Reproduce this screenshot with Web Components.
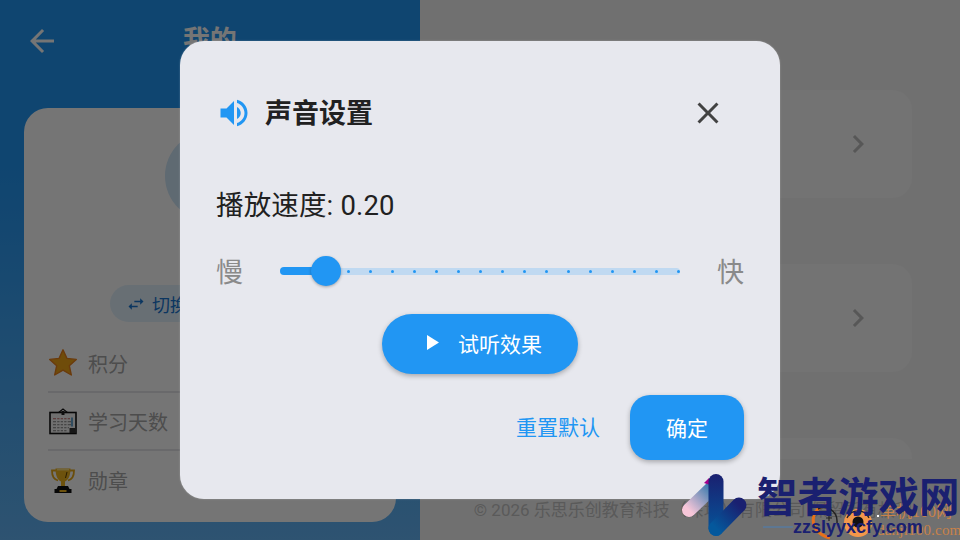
<!DOCTYPE html>
<html lang="zh">
<head>
<meta charset="utf-8">
<title>声音设置</title>
<style>
  html, body { margin: 0; height: 100%; overflow: hidden; }
  body { font-family: Roboto, "Noto Sans CJK SC", sans-serif; }
</style>
</head>
<body>
<app-screen>
  <profile-panel slot="left">
    <stat-row icon="star" label="积分" first></stat-row>
    <stat-row icon="calendar" label="学习天数"></stat-row>
    <stat-row icon="trophy" label="勋章" last></stat-row>
  </profile-panel>
  <settings-panel slot="right">
    <menu-card></menu-card>
    <menu-card></menu-card>
    <menu-card></menu-card>
  </settings-panel>
  <sound-dialog slot="overlay" value="0.20"></sound-dialog>
  <site-watermark slot="overlay"></site-watermark>
</app-screen>

<script>
const html = String.raw;

function define(name, markup, extra) {
  const tpl = document.createElement("template");
  tpl.innerHTML = markup;
  customElements.define(name, class extends HTMLElement {
    constructor() {
      super();
      this.attachShadow({ mode: "open" }).appendChild(tpl.content.cloneNode(true));
    }
    connectedCallback() {
      if (extra) extra(this, this.shadowRoot);
    }
  });
}

define("app-screen", html`
  <style>
    :host { display: block; position: relative; width: 960px; height: 540px; overflow: hidden; }
    .page { display: flex; height: 100%; }
    .scrim { position: absolute; inset: 0; background: rgba(0, 0, 0, .54); }
  </style>
  <div class="page">
    <slot name="left"></slot>
    <slot name="right"></slot>
  </div>
  <div class="scrim"></div>
  <slot name="overlay"></slot>
`);

define("profile-panel", html`
  <style>
    :host {
      display: flex; flex-direction: column; box-sizing: border-box;
      width: 420px; height: 540px; padding: 0 24px 18px;
      background: linear-gradient(180deg, #2196f3 0%, #2196f3 30%, #64b5f6 100%);
    }
    header { display: flex; align-items: center; height: 82px; margin-bottom: 26px; position: relative; flex: none; }
    header svg { width: 36px; height: 36px; fill: #fff; }
    h1 { margin: 0; position: absolute; left: 0; right: 0; text-align: center; font-size: 27px; font-weight: 700; color: #fff; line-height: 82px; }
    .card { flex: 1; background: #fff; border-radius: 24px; padding: 23px 24px 0; display: flex; flex-direction: column; align-items: center; }
    .avatar { width: 90px; height: 90px; border-radius: 50%; background: #cfe6f8; flex: none; }
    .switch {
      display: flex; align-items: center; gap: 6px; box-sizing: border-box; flex: none;
      margin-top: 64px; height: 37px; padding: 0 16px; border-radius: 19px;
      background: #e3f2fd; color: #1976d2; font-size: 18px; width: 200px;
    }
    .switch svg { width: 20px; height: 20px; fill: #1976d2; flex: none; }
    .rows { align-self: stretch; margin-top: 14px; }
  </style>
  <header>
    <svg viewBox="0 0 24 24"><path d="M20 11H7.830l5.590-5.590L12 4l-8 8 8 8 1.410-1.410L7.830 13H20z"/></svg>
    <h1>我的</h1>
  </header>
  <div class="card">
    <div class="avatar"></div>
    <div class="switch">
      <svg viewBox="0 0 24 24"><path d="M6.990 11 3 15l3.990 4v-3H14v-2H6.990zM21 9l-3.990-4v3H10v2h7.010v3z"/></svg>
      <span>切换</span>
    </div>
    <div class="rows"><slot></slot></div>
  </div>
`);

const statIcons = {
  star: html`<svg viewBox="0 0 28 28"><path d="M14 .8l3.900 8.600 9.400 1-7 6.300 2 9.300L14 21.200l-8.300 4.800 2-9.300-7-6.300 9.400-1z" fill="#f2a516" stroke="#e8801c" stroke-width="1.400" stroke-linejoin="round"/></svg>`,
  calendar: html`<svg viewBox="0 0 28 28">
    <path d="M9 6l5-4 5 4" fill="none" stroke="#111" stroke-width="1.200"/>
    <rect x="1" y="5.500" width="26" height="21" fill="#f4f4f4" stroke="#111" stroke-width="1.600"/>
    <rect x="12.500" y="4" width="3" height="4" fill="#222"/>
    <g fill="#999"><rect x="4" y="11" width="17" height="1.300" fill="#c88"/><rect x="4" y="14" width="20" height="1.300"/><rect x="4" y="17" width="20" height="1.300"/><rect x="4" y="20" width="16" height="1.300"/><rect x="4" y="23" width="14" height="1.300"/></g>
    <g fill="#f4f4f4"><rect x="7" y="10" width="1.200" height="15"/><rect x="10.500" y="10" width="1.200" height="15"/><rect x="14" y="10" width="1.200" height="15"/><rect x="17.500" y="10" width="1.200" height="15"/></g>
    <rect x="22" y="10.500" width="2" height="9" fill="#6aa7cf"/>
    <rect x="20.500" y="21" width="6" height="5" fill="#333"/>
  </svg>`,
  trophy: html`<svg viewBox="0 0 28 28">
    <path d="M7 4.500H3c0 6 2 9 6 10M21 4.500h4c0 6-2 9-6 10" fill="none" stroke="#e6a817" stroke-width="1.800"/>
    <path d="M6.500 2.500h15c0 7-2 11.500-5.500 13v4.500h-4v-4.500C8.500 14 6.500 9.500 6.500 2.500z" fill="#eeb21d"/>
    <path d="M8 3h12v1.500H8z" fill="#f8dc7a"/>
    <path d="M18 6l-1.500 6" stroke="#5a3d00" stroke-width="1"/>
    <path d="M9 20h10l1.500 3h-13z" fill="#111"/>
    <rect x="5.500" y="23" width="17" height="4" fill="#111"/>
    <rect x="10.500" y="24" width="7" height="2" fill="#eeb21d"/>
  </svg>`
};

define("stat-row", html`
  <style>
    :host { display: block; box-sizing: border-box; height: 58px; }
    :host(:not([last])) { border-bottom: 2px solid #e5e5ea; }
    :host([first]) .row { margin-top: -1px; }
    :host([last]) .row { margin-top: 1px; }
    .row { display: flex; align-items: center; gap: 11px; height: 56px; font-size: 20px; padding-left: 1px; color: #a8a8a8; }
    .icon { width: 28px; height: 28px; flex: none; }
    svg { display: block; width: 28px; height: 28px; }
  </style>
  <div class="row"><span class="icon"></span><span class="label"></span></div>
`, (el, root) => {
  root.querySelector(".icon").innerHTML = statIcons[el.getAttribute("icon")];
  root.querySelector(".label").textContent = el.getAttribute("label");
});

define("settings-panel", html`
  <style>
    :host { flex: 1; display: flex; flex-direction: column; box-sizing: border-box; height: 540px; padding: 0 48px 0 36px; background: #f5f5f5; }
    .scroll { height: 459px; box-sizing: border-box; padding-top: 90px; overflow: hidden; display: flex; flex-direction: column; gap: 66px; flex: none; }
    footer { margin: 39px 0 0 18px; font-size: 17px; line-height: 24px; color: #c4c4c4; white-space: nowrap; }
  </style>
  <div class="scroll"><slot></slot></div>
  <footer>© 2026 乐思乐创教育科技（深圳）有限公司 保留所有权利</footer>
`);

define("menu-card", html`
  <style>
    :host { display: flex; align-items: center; justify-content: flex-end; box-sizing: border-box; flex: none; height: 108px; padding-right: 36px; background: #fafafa; border-radius: 20px; }
    svg { width: 36px; height: 36px; fill: #bdbdbd; display: block; }
  </style>
  <svg viewBox="0 0 24 24"><path d="M8.590 16.590 13.170 12 8.590 7.410 10 6l6 6-6 6z"/></svg>
`);

define("speed-slider", html`
  <style>
    :host { display: block; position: relative; flex: 1; height: 30px; }
    .track { position: absolute; left: 0; right: 0; top: 11.500px; height: 7px; border-radius: 4px; background: #c0d9f1; }
    .active { position: absolute; left: 0; top: 11px; width: 46px; height: 8px; border-radius: 4px 0 0 4px; background: #2196f3; }
    .dots { position: absolute; left: .5px; right: .5px; top: 13.500px; display: flex; justify-content: space-between; }
    .dots i { width: 3px; height: 3px; border-radius: 50%; background: #2196f3; }
    .dots i.off { visibility: hidden; }
    .thumb { position: absolute; left: 31px; top: 0; width: 30px; height: 30px; border-radius: 50%; background: #2196f3; box-shadow: 0 1px 3px rgba(0, 0, 0, .3); }
  </style>
  <div class="track"></div>
  <div class="active"></div>
  <div class="dots"></div>
  <div class="thumb"></div>
`, (el, root) => {
  const dots = root.querySelector(".dots");
  for (let i = 0; i <= 18; i++) {
    const d = document.createElement("i");
    if (i < 3) d.className = "off";
    dots.appendChild(d);
  }
});

define("app-button", html`
  <style>
    :host { display: inline-flex; align-items: center; justify-content: center; box-sizing: border-box; color: #fff; font-size: 21px; background: #2196f3; box-shadow: 0 2px 5px rgba(0, 0, 0, .28); }
    :host([pill]) { width: 196px; height: 60px; border-radius: 30px; gap: 19px; padding: 0 0 3px 9px; }
    :host([box]) { width: 114px; height: 65px; border-radius: 20px; padding-bottom: 2px; }
  </style>
  <slot></slot>
`);

define("sound-dialog", html`
  <style>
    :host {
      position: absolute; left: 180px; top: 41px; width: 600px; height: 458px; box-sizing: border-box;
      display: flex; flex-direction: column; padding: 0 36px;
      background: #e7e8ee; border-radius: 24px; box-shadow: 0 0 2px rgba(255, 255, 255, .3);
    }
    .head { display: flex; align-items: center; height: 144px; flex: none; }
    .head .spk { width: 36px; height: 36px; fill: #2196f3; flex: none; }
    h2 { margin: 0 0 4px 13px; flex: 1; font-size: 27px; font-weight: 700; color: #212121; }
    .close { width: 36px; height: 36px; fill: #424242; margin-right: 18px; flex: none; }
    .speed { margin-top: 1px; font-size: 27.500px; letter-spacing: .15px; line-height: 40px; color: #212121; flex: none; }
    .slide { display: flex; align-items: center; margin-top: 30px; height: 30px; flex: none; font-size: 27px; color: #8a8a8a; }
    .slide span { position: relative; top: -1px; }
    .slide .slow { width: 64px; }
    .slide .fast { width: 64px; text-align: right; }
    .try { display: flex; justify-content: center; margin-top: 28px; flex: none; }
    .try svg { width: 12px; height: 15px; fill: #fff; }
    .foot { display: flex; justify-content: flex-end; align-items: center; gap: 30px; margin-top: 21px; flex: none; }
    .reset { font-size: 21px; color: #2196f3; margin-bottom: 4px; }
  </style>
  <div class="head">
    <svg class="spk" viewBox="0 0 24 24"><path d="M3 9v6h4l5 5V4L7 9H3zm13.500 3c0-1.770-1.020-3.290-2.500-4.030v8.050c1.480-.73 2.500-2.250 2.500-4.020zM14 3.230v2.060c2.890.86 5 3.540 5 6.710s-2.110 5.850-5 6.710v2.060c4.010-.91 7-4.490 7-8.770s-2.990-7.860-7-8.770z"/></svg>
    <h2>声音设置</h2>
    <svg class="close" viewBox="0 0 24 24"><path d="M19 6.410 17.590 5 12 10.590 6.410 5 5 6.410 10.590 12 5 17.590 6.410 19 12 13.410 17.590 19 19 17.590 13.410 12z"/></svg>
  </div>
  <div class="speed">播放速度: 0.20</div>
  <div class="slide"><span class="slow">慢</span><speed-slider></speed-slider><span class="fast">快</span></div>
  <div class="try">
    <app-button pill><svg viewBox="0 0 12 15"><path d="M0 0l12 7.500-12 7.500z"/></svg><span>试听效果</span></app-button>
  </div>
  <div class="foot">
    <span class="reset">重置默认</span>
    <app-button box>确定</app-button>
  </div>
`);

define("site-watermark", html`
  <style>
    :host { position: absolute; left: 680px; top: 470px; width: 280px; height: 70px; display: block; }
    svg.logo, svg.mark { position: absolute; left: 0; top: 0; width: 280px; height: 70px; }
    .name { position: absolute; left: 77px; top: 3px; font-size: 40.500px; line-height: 50px; font-weight: 700; color: #1a2070; white-space: nowrap; }
    .url { position: absolute; left: 113px; top: 47px; font: 700 18px/20px "Liberation Sans", sans-serif; color: #1a2070; white-space: nowrap; }
    .other { position: absolute; left: 200px; top: 31px; font: 16px/22px "Liberation Serif", "Noto Sans CJK SC", serif; color: #c9824a; white-space: nowrap; }
    .other2 { position: absolute; left: 197px; top: 51px; font: 15px/18px "Liberation Serif", serif; letter-spacing: .2px; color: #c9824a; white-space: nowrap; }
  </style>
  <svg class="mark" viewBox="0 0 280 70">
    <path d="M83 57H113" stroke="#4a7fb5" stroke-width="1"/>
    <path d="M148 35C130 36 126 62 150 68" fill="none" stroke="#e8711a" stroke-width="3"/>
    <path d="M138 39C146 35 158 40 157 53" fill="none" stroke="#222" stroke-width="1.500"/>
    <path d="M146 48h6M149 45v6" stroke="#222" stroke-width="1.200"/>
    <circle cx="178" cy="53" r="14" fill="#f4974a"/>
    <circle cx="178" cy="52" r="5.500" fill="#111"/>
    <path d="M167 48a12 12 0 0 1 22 0" fill="none" stroke="#222" stroke-width="1.200"/>
    <rect x="197" y="45" width="2" height="2" fill="#fff"/>
  </svg>
  <div class="other">单机100网</div>
  <div class="other2">danji100.com</div>
  <svg class="logo" viewBox="0 0 280 70">
    <defs>
      <linearGradient id="a" gradientUnits="userSpaceOnUse" x1="9" y1="40" x2="35" y2="15"><stop offset="0" stop-color="#f7c6d8"/><stop offset="1" stop-color="#1e6fa8"/></linearGradient>
      <linearGradient id="b" gradientUnits="userSpaceOnUse" x1="36" y1="4" x2="36" y2="66"><stop offset="0" stop-color="#1a2070"/><stop offset="1" stop-color="#04589c"/></linearGradient>
      <linearGradient id="c" gradientUnits="userSpaceOnUse" x1="36" y1="58" x2="59" y2="35"><stop offset="0" stop-color="#04589c"/><stop offset="1" stop-color="#1a2070"/></linearGradient>
    </defs>
    <path d="M9 40 L35 15" stroke="url(#a)" stroke-width="14" stroke-linecap="round"/>
    <path d="M24 13l5-5 4 8z" fill="#a0008c"/>
    <path d="M36 11.500V58.500" stroke="url(#b)" stroke-width="15" stroke-linecap="round"/>
    <path d="M36 58.500 L59 35" stroke="url(#c)" stroke-width="15" stroke-linecap="round"/>
  </svg>
  <div class="name">智者游戏网</div>
  <div class="url">zzslyyxcfy.com</div>
`);
</script>
</body>
</html>
